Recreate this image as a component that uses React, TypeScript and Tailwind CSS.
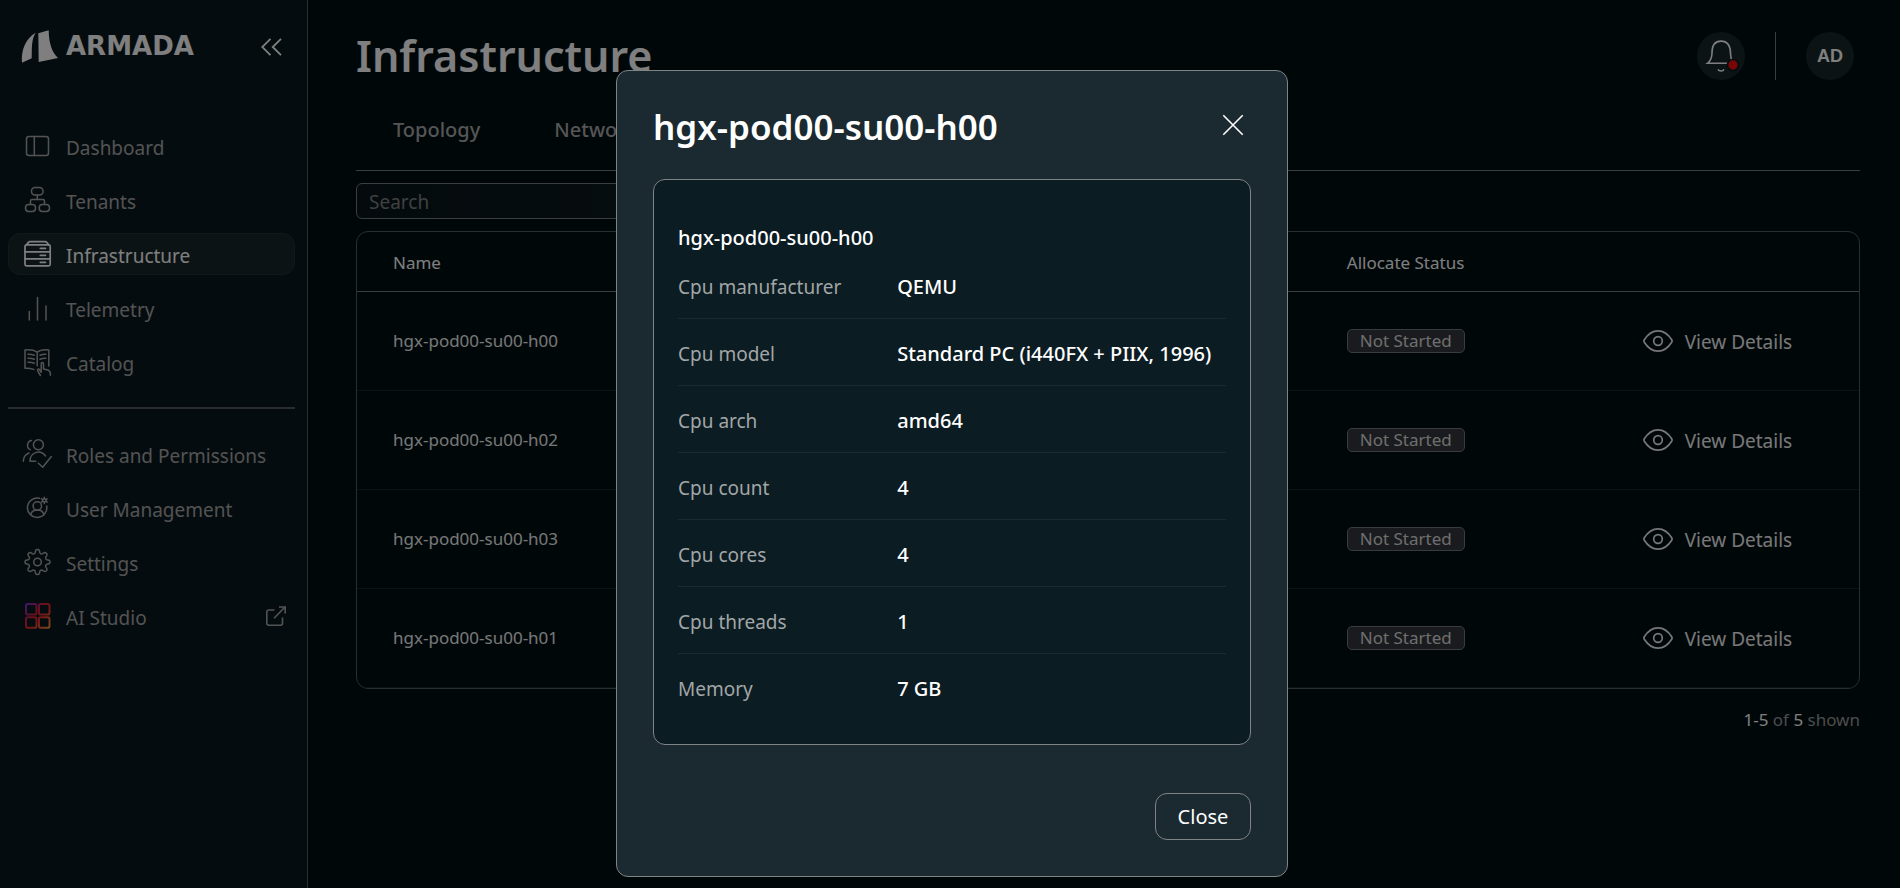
import React, { useState } from "react";
import { clsx } from "clsx";

interface NavEntry {
  label: string;
  icon: React.ReactNode;
  external?: boolean;
}

interface Host {
  name: string;
  status: string;
}

const Icon = ({ children, width = 1.5 }: { children: React.ReactNode; width?: number }) => (
  <svg
    viewBox="0 0 28 28"
    className="h-7 w-7 shrink-0 overflow-visible"
    fill="none"
    stroke="currentColor"
    strokeWidth={width}
    strokeLinecap="round"
    strokeLinejoin="round"
    aria-hidden="true"
  >
    {children}
  </svg>
);

// Outline of a gear with eight soft teeth, first tooth pointing up
const gearPath = () => {
  const points: string[] = [];
  for (let i = 0; i < 160; i++) {
    const angle = (i / 160) * Math.PI * 2;
    const radius = 10.7 + 1.9 * Math.tanh(1.6 * Math.cos(8 * angle));
    points.push(`${(13.5 + radius * Math.sin(angle)).toFixed(2)} ${(14 - radius * Math.cos(angle)).toFixed(2)}`);
  }
  return `M${points.join("L")}Z`;
};

const mainNav: NavEntry[] = [
  {
    label: "Dashboard",
    icon: (
      <Icon>
        <rect x="2.5" y="4.5" width="22" height="19" rx="2.5" />
        <path d="M10.3 4.5v19" />
      </Icon>
    ),
  },
  {
    label: "Tenants",
    icon: (
      <Icon>
        <rect x="7.5" y="1.5" width="11.5" height="7.5" rx="3.5" />
        <rect x="1.5" y="18.5" width="10" height="7" rx="3.2" />
        <rect x="15.2" y="18.5" width="10.3" height="7" rx="3.2" />
        <path d="M13.3 9v4.5M6.5 18.5v-3.5q0-1.5 1.5-1.5h11q1.5 0 1.5 1.5v3.5" />
      </Icon>
    ),
  },
  {
    label: "Infrastructure",
    icon: (
      <Icon width={1.7}>
        <path d="M2.5 4.8 4.4 2.4Q5 1.6 6 1.6h15.2q1 0 1.6.8l1.9 2.4" />
        <rect x="1" y="4.8" width="25.2" height="21" rx="1.6" />
        <path d="M1 11.8h25.2M1 18.8h25.2M16.3 8.3h5.2M16.3 15.3h5.2M16.3 22.3h5.2" />
      </Icon>
    ),
  },
  {
    label: "Telemetry",
    icon: (
      <Icon>
        <path d="M5.3 17.5v8.5M13.5 3.5v22.5M22 12v14" />
      </Icon>
    ),
  },
  {
    label: "Catalog",
    icon: (
      <Icon>
        <path d="M13.2 4.2C10 2 5.5 1.6 1 2v18.2c3.2-.1 6 .2 8.800 1.200M13.2 4.200C16 2 20.500 1.600 24.800 2v16M13.200 4.200v13.600" />
        <path d="M4 6.300c2.500-.1 4.500.2 6.300 1M4 10.200c2.500-.1 4.500.2 6.300 1M4 14.200c2.500-.1 4.500.2 6.300 1M16 7.300c1.800-.8 3.600-1.100 5.800-1M16 11.200c1.800-.8 3.600-1.100 5.800-1" />
        <path d="M16.500 27.500c-1.300-1.800-2.500-3.700-2.900-5.300-.2-1.300 1.300-1.500 2-.3l1.600 2.400v-8.500c0-1.600 2.300-1.600 2.300 0v5.200l4.300 1c2 .5 2.700 1.800 2.600 5.200" />
      </Icon>
    ),
  },
];

const adminNav: NavEntry[] = [
  {
    label: "Roles and Permissions",
    icon: (
      <Icon>
        <circle cx="14.4" cy="4.8" r="5" />
        <path d="M7.400.4C2.600 1.300 2.400 8.300 6.300 9.600M6 21.200C5.800 12.500 16 8.800 21.500 16M6 21.200h5.700M-.6 21.200c0-3.800 2-6.800 5.600-8.200M14.400 23.200l4.300 4.100L27.300 16.500" />
      </Icon>
    ),
  },
  {
    label: "User Management",
    icon: (
      <Icon>
        <path d="M15.500 4.300A9.700 9.700 0 1 0 22.700 12" />
        <circle cx="13.300" cy="12" r="4.200" />
        <path d="M6.700 20.600c.8-3 3-4.500 6.600-4.500s5.800 1.500 6.600 4.500" />
        <circle cx="20.300" cy="6.400" r="1.700" />
        <path d="M20.300 3.200v1.500M20.300 8.100v1.500M17.500 4.800l1.300.8M21.800 7.200l1.300.8M17.500 8l1.300-.8M21.800 5.600l1.300-.8" />
      </Icon>
    ),
  },
  {
    label: "Settings",
    icon: (
      <Icon>
        <path d={gearPath()} />
        <circle cx="13.5" cy="14" r="3.8" />
      </Icon>
    ),
  },
  {
    label: "AI Studio",
    external: true,
    icon: (
      <svg viewBox="0 0 28 28" className="h-7 w-7 shrink-0" fill="none" strokeWidth="2" aria-hidden="true">
        <defs>
          <linearGradient id="studio" x1="2" y1="2" x2="26" y2="26" gradientUnits="userSpaceOnUse">
            <stop offset="0" stopColor="#7a2fd0" />
            <stop offset="0.4" stopColor="#d81f38" />
            <stop offset="0.6" stopColor="#e8302a" />
            <stop offset="1" stopColor="#f0903c" />
          </linearGradient>
        </defs>
        <g stroke="url(#studio)">
          <rect x="2" y="2" width="10.5" height="10.5" rx="1.8" />
          <rect x="15" y="2" width="10.5" height="10.5" rx="1.8" />
          <rect x="2" y="15.2" width="10.5" height="10.5" rx="1.8" />
          <rect x="15" y="15.2" width="10.5" height="10.5" rx="1.8" />
        </g>
      </svg>
    ),
  },
];

const hosts: Host[] = [
  { name: "hgx-pod00-su00-h00", status: "Not Started" },
  { name: "hgx-pod00-su00-h02", status: "Not Started" },
  { name: "hgx-pod00-su00-h03", status: "Not Started" },
  { name: "hgx-pod00-su00-h01", status: "Not Started" },
];

const specs: [string, string][] = [
  ["Cpu manufacturer", "QEMU"],
  ["Cpu model", "Standard PC (i440FX + PIIX, 1996)"],
  ["Cpu arch", "amd64"],
  ["Cpu count", "4"],
  ["Cpu cores", "4"],
  ["Cpu threads", "1"],
  ["Memory", "7 GB"],
];

const NavLink = ({ entry, active }: { entry: NavEntry; active: boolean }) => (
  <a
    href="#"
    className={clsx(
      "flex h-[42px] items-center gap-3.5 rounded-xl border pr-2 pl-[15px] text-[19px]",
      active ? "border-[#222f34] bg-[#18262b] text-white" : "border-transparent text-[#a6a6a6]"
    )}
  >
    {entry.icon}
    <span className="flex-1 pt-1 whitespace-nowrap">{entry.label}</span>
    {entry.external && (
      <svg viewBox="0 0 20 20" className="h-5 w-5" fill="none" stroke="currentColor" strokeWidth="1.6" aria-hidden="true">
        <path d="M8.500 4H3Q.8 4 .8 6v11q0 2.200 2.200 2.200h11.500q2 0 2-2.200v-5.500M8 12.300 19 1M13 1h6.200v6.500" />
      </svg>
    )}
  </a>
);

const Sidebar = () => (
  <aside className="w-[308px] shrink-0 border-r border-[#555b5e] bg-[#0b191e] px-2">
    <div className="flex h-[125px] items-start justify-between pt-[30px] pr-4 pl-3">
      <a href="#" className="flex items-center gap-1.5 text-white">
        <svg viewBox="0 0 40 34" className="h-[34px] w-10" fill="currentColor" aria-hidden="true">
          <path d="M2 32.700C.8 20 6 8 15.700 2.700 11 9.500 12 20 11.700 28.300Z" />
          <path d="M18.300 3.300 28.700.3C28.800 12 31.500 22 38 28L18.700 32Z" />
        </svg>
        <span className="pb-0.5 font-['DejaVu_Sans',sans-serif] text-[26px] leading-none font-bold">ARMADA</span>
      </a>
      <button type="button" aria-label="Collapse menu" className="pt-2 text-white">
        <svg viewBox="0 0 22 18" className="h-[18px] w-[22px]" fill="none" stroke="currentColor" strokeWidth="1.8" aria-hidden="true">
          <path d="M9.500.8 1.200 9l8.300 8.200M20 .8 11.700 9l8.300 8.200" />
        </svg>
      </button>
    </div>
    <nav>
      <div className="flex flex-col gap-3 pr-1">
        {mainNav.map((entry) => (
          <NavLink key={entry.label} entry={entry} active={entry.label === "Infrastructure"} />
        ))}
      </div>
      <hr className="my-6 mr-1 border-t-2 border-[#56595e]" />
      <div className="flex flex-col gap-3 pr-1">
        {adminNav.map((entry) => (
          <NavLink key={entry.label} entry={entry} active={false} />
        ))}
      </div>
    </nav>
  </aside>
);

const Header = () => (
  <header className="flex items-center justify-between pt-8 pr-1.5">
    <h1 className="text-[43px] leading-[48px] font-semibold">Infrastructure</h1>
    <div className="flex items-center gap-[30px]">
      <button type="button" aria-label="Notifications" className="h-12 w-12 rounded-full bg-[#18262b]">
        <svg viewBox="0 0 48 48" className="h-12 w-12" fill="none" stroke="currentColor" strokeWidth="1.6" aria-hidden="true">
          <path d="M10.500 31.300h25.800c-2-3-2.800-5.500-2.800-9.500 0-7.500-2.500-12.700-9.500-12.700s-9 5.200-9 11.700c0 5-1.300 8-4.500 10.500Z" />
          <path d="M21 37.300c1 2.200 5 2.200 6 0" />
          <circle cx="36" cy="33" r="5.500" fill="#f00d0d" stroke="#0b191e" />
        </svg>
      </button>
      <div className="h-12 w-px bg-[#767b7d]" />
      <button type="button" className="h-12 w-12 rounded-full bg-[#18262b] font-['Liberation_Sans',sans-serif] text-lg font-bold">
        AD
      </button>
    </div>
  </header>
);

const HostTable = ({ onView }: { onView: (name: string) => void }) => (
  <div className="mt-3 overflow-hidden rounded-xl border border-[#565d60]">
    <table className="w-full table-fixed text-left text-[17px]">
      <colgroup>
        <col className="w-[63.5%]" />
        <col className="w-[19.7%]" />
        <col />
      </colgroup>
      <thead>
        <tr className="h-[59px] border-b border-[#767b7d]">
          <th className="px-9 pt-0.5 font-normal">Name</th>
          <th className="px-9 pt-0.5 font-normal">Allocate Status</th>
          <th><span className="sr-only" /></th>
        </tr>
      </thead>
      <tbody>
        {hosts.map((host) => (
          <tr key={host.name} className="h-[99px] border-b border-[#14252b]">
            <td className="px-9 text-[#eeeeee]">{host.name}</td>
            <td className="px-9">
              <span className="inline-flex h-6 items-center rounded-[5px] border border-[#72777b] bg-[#33373c] px-3 text-[#dddddd]">
                {host.status}
              </span>
            </td>
            <td className="px-9">
              <button type="button" onClick={() => onView(host.name)} className="flex items-center gap-3 text-[19px] text-[#f0f0f0]">
                <svg viewBox="0 0 30 22" className="h-[22px] w-[30px]" fill="none" stroke="currentColor" strokeWidth="1.7" aria-hidden="true">
                  <path d="M1.300 12.200q-.7-1.200 0-2.400C5 4 9.500 .9 15 .9s10 3.100 13.700 8.900q.7 1.200 0 2.400C25 18 20.500 21.100 15 21.100S5 18 1.300 12.200Z" />
                  <circle cx="15" cy="11" r="4.300" />
                </svg>
                <span className="pt-1">View Details</span>
              </button>
            </td>
          </tr>
        ))}
      </tbody>
    </table>
  </div>
);

const DetailsModal = ({ name, onClose }: { name: string; onClose: () => void }) => (
  <div className="fixed inset-0 z-10 flex items-start justify-center overflow-hidden bg-black/50 pt-[70px] pl-1">
    <div role="dialog" aria-modal="true" aria-labelledby="details-title" className="w-full max-w-2xl rounded-xl border border-[#7f8486] bg-[#1b2a30] p-9">
      <div className="mb-8 flex items-center justify-between">
        <h2 id="details-title" className="text-[35px] leading-10 font-semibold">{name}</h2>
        <button type="button" aria-label="Dismiss" onClick={onClose} className="px-[7px] pb-1">
          <svg viewBox="0 0 22 22" className="h-[22px] w-[22px]" fill="none" stroke="currentColor" strokeWidth="1.6" aria-hidden="true">
            <path d="m1.300 1.300 19.400 19.400M20.700 1.300 1.300 20.700" />
          </svg>
        </button>
      </div>
      <section className="rounded-xl border border-[#7f8486] bg-[#0b1c22] p-6 text-xl">
        <h3 className="pt-5 text-xl font-medium">{name}</h3>
        <dl>
          {specs.map(([label, value]) => (
            <div key={label} className="grid grid-cols-[2fr_3fr] border-b border-[#1b2a30] pt-[21px] pb-[17px] last:border-b-0">
              <dt className="text-[19px] leading-7 text-[#a3a6a7]">{label}</dt>
              <dd className="font-medium whitespace-nowrap">{value}</dd>
            </div>
          ))}
        </dl>
      </section>
      <div className="mt-12 flex justify-end">
        <button type="button" onClick={onClose} className="h-[47px] w-24 rounded-xl border border-[#7f8486] text-xl">
          Close
        </button>
      </div>
    </div>
  </div>
);

const App = () => {
  const [selected, setSelected] = useState<string | null>("hgx-pod00-su00-h00");

  return (
    <div className="flex min-h-screen bg-[#010e13] font-['Noto_Sans',sans-serif] text-white">
      <Sidebar />
      <main className="min-w-0 flex-1 pr-10 pl-12">
        <Header />
        <div role="tablist" className="flex h-[91px] border-b border-[#767b7d] pt-9 text-xl font-medium text-[#aaaaaa]">
          <button type="button" role="tab" className="self-start px-[37px]">Topology</button>
          <button type="button" role="tab" className="self-start px-[37px]">Network</button>
        </div>
        <input
          type="text"
          placeholder="Search"
          aria-label="Search"
          className="mt-3 block h-9 w-96 rounded-md border border-[#767b7d] bg-linear-to-r from-[#08151a] to-[#0f1c20] px-3 pt-0.5 text-[19px] placeholder:text-[#7d8284]"
        />
        <HostTable onView={setSelected} />
        <p className="mt-[18px] text-right text-[17px] text-[#999999]">
          <span className="text-white">1-5</span> of <span className="text-white">5</span> shown
        </p>
      </main>
      {selected && <DetailsModal name={selected} onClose={() => setSelected(null)} />}
    </div>
  );
};

export default App;
